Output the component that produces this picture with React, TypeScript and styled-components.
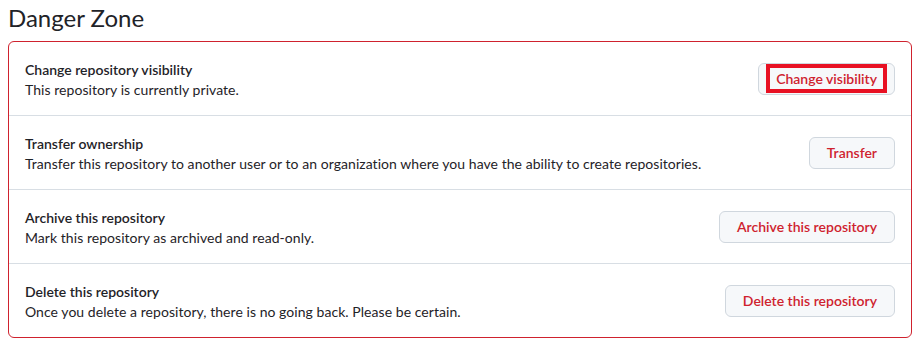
import React from "react";
import styled, { createGlobalStyle } from "styled-components";

type Item = {
  title: string;
  description: string;
  action: string;
  highlighted?: boolean;
};

const items: Item[] = [
  {
    title: "Change repository visibility",
    description: "This repository is currently private.",
    action: "Change visibility",
    highlighted: true,
  },
  {
    title: "Transfer ownership",
    description:
      "Transfer this repository to another user or to an organization where you have the ability to create repositories.",
    action: "Transfer",
  },
  {
    title: "Archive this repository",
    description: "Mark this repository as archived and read-only.",
    action: "Archive this repository",
  },
  {
    title: "Delete this repository",
    description:
      "Once you delete a repository, there is no going back. Please be certain.",
    action: "Delete this repository",
  },
];

const App = () => {
  return (
    <>
      <GlobalStyle />
      <Page>
        <Heading>Danger Zone</Heading>
        <ZoneBox>
          {items.map((item) => (
            <Row key={item.title}>
              <Info>
                <RowTitle>{item.title}</RowTitle>
                <RowText>{item.description}</RowText>
              </Info>
              <DangerButton>
                <Label $highlighted={item.highlighted}>{item.action}</Label>
              </DangerButton>
            </Row>
          ))}
        </ZoneBox>
      </Page>
    </>
  );
};
export default App;

const GlobalStyle = createGlobalStyle`
  body {
    margin: 0;
    background: #ffffff;
    font-family: Lato, "Noto Sans", sans-serif;
    color: #1f2328;
  }
`;

const Page = styled.div`
  padding: 0 8px;
`;

const Heading = styled.h2`
  margin: 0;
  padding-top: 2px;
  font-size: 24px;
  font-weight: 400;
  line-height: 32px;
  height: 39px;
  color: #1f2328;
`;

const ZoneBox = styled.div`
  border: 1px solid #cf222e;
  border-radius: 6px;
`;

const Row = styled.div`
  display: flex;
  align-items: center;
  justify-content: space-between;
  height: 73px;
  padding: 0 16px;
  & + & {
    border-top: 1px solid #d8dee4;
  }
`;

const Info = styled.div`
  display: flex;
  flex-direction: column;
  padding-top: 2px;
`;

const RowTitle = styled.div`
  font-size: 14px;
  font-weight: 600;
  line-height: 20px;
`;

const RowText = styled.div`
  font-size: 14px;
  line-height: 20px;
  letter-spacing: 0.05px;
`;

const DangerButton = styled.button`
  display: flex;
  align-items: center;
  justify-content: center;
  height: 32px;
  padding: 0 7px;
  background: #f6f8fa;
  border: 1px solid #d0d7de;
  border-radius: 6px;
  color: #cf222e;
  font-family: inherit;
  font-size: 14px;
  font-weight: 600;
  cursor: pointer;
`;

const Label = styled.span<{ $highlighted?: boolean }>`
  padding: 1px 6px;
  line-height: 19px;
  border: 4px solid ${({ $highlighted }) => ($highlighted ? "#e81123" : "transparent")};
`;
